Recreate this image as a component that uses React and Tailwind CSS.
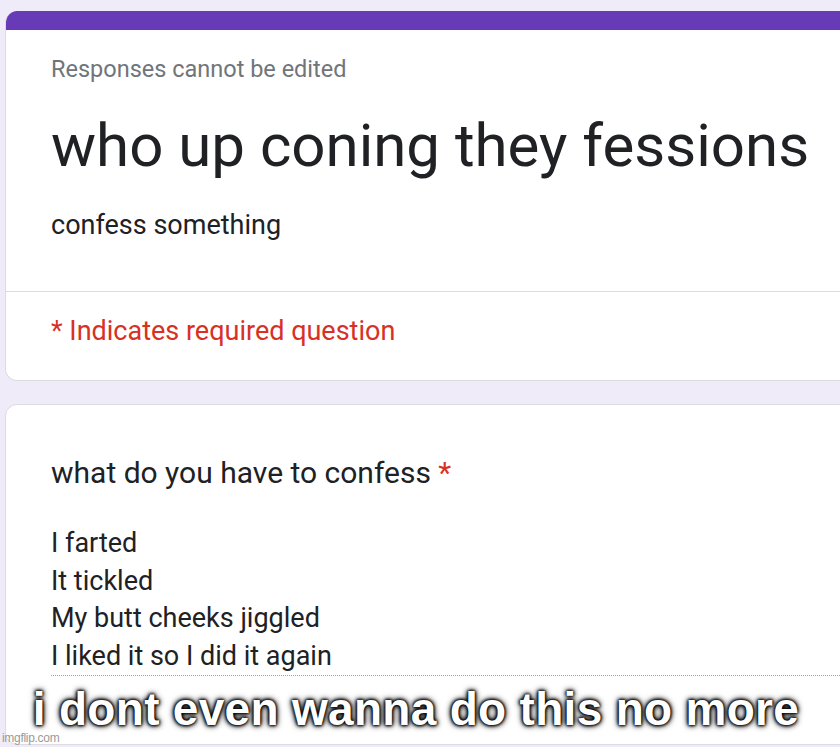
import React from 'react';

const answer = ['I farted', 'It tickled', 'My butt cheeks jiggled', 'I liked it so I did it again'];

const App = () => {
  return (
    <div className="relative w-[840px] h-[747px] overflow-hidden bg-[#f0ebf8] pt-[11px] pl-[5px] font-['Roboto',_'Liberation_Sans',_sans-serif]">
      {/* header card */}
      <div className="w-[900px] bg-white rounded-l-[12px] border border-[#dadce0] border-t-0 overflow-hidden">
        <div className="h-[19px] bg-[#673ab7]"></div>
        <div className="pl-[45px]">
          <div className="mt-[24px] text-[23.5px] leading-[30px] text-[#70757a]">Responses cannot be edited</div>
          <div className="mt-[26.5px] text-[60px] leading-[70px] text-[#202124]">who up coning they fessions</div>
          <div className="mt-[27.5px] text-[27px] leading-[34px] text-[#202124]">confess something</div>
        </div>
        <div className="mt-[49px] border-t border-[#dadce0]"></div>
        <div className="pl-[45px] pt-[22px] pb-[32px] text-[27px] leading-[34px] text-[#d93025]">
          * Indicates required question
        </div>
      </div>

      {/* question card */}
      <div className="mt-[23px] w-[900px] h-[341px] bg-white rounded-l-[12px] border border-[#dadce0] pl-[45px] pt-[49px]">
        <div className="text-[30px] leading-[38px] text-[#202124]">
          what do you have to confess <span className="text-[#d93025]">*</span>
        </div>
        <div className="mt-[33px] border-b border-dotted border-[#9aa0a6] text-[27px] leading-[37.5px] text-[#202124]">
          {answer.map((line) => (
            <div key={line}>{line}</div>
          ))}
        </div>
      </div>

      {/* meme caption */}
      <div className="absolute left-0 right-0 top-[681px] flex justify-center pr-[8px]">
        <div className="text-[46px] leading-[56px] font-bold tracking-[0.3px] text-white font-['Liberation_Sans',_Arial,_sans-serif] [text-shadow:0_0_3px_#000,0_0_3px_#000,0_0_5px_#000,0_0_7px_#000] whitespace-nowrap">
          i dont even wanna do this no more
        </div>
      </div>
      <div className="absolute left-[2px] top-[731px] text-[12px] leading-[14px] text-[#9a9a9a] font-['Liberation_Sans',_Arial,_sans-serif] tracking-[-0.3px]">
        imgflip.com
      </div>
    </div>
  );
};

export default App;
